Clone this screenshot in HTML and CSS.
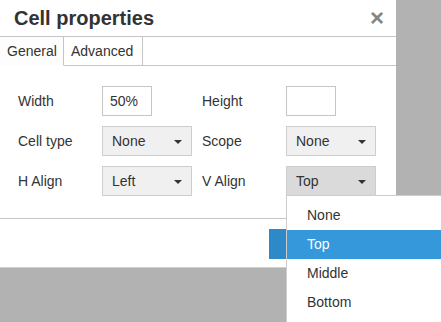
FILE: index.html
```html
<!DOCTYPE html>
<html lang="en">
<head>
  <meta charset="UTF-8">
  <title>Cell properties</title>
  <link rel="stylesheet" href="styles.css">
</head>
<body>
  <div class="dialog">
    <div class="dialog-head">
      <h1>Cell properties</h1>
      <span class="close">&times;</span>
    </div>

    <div class="tabs">
      <div class="tab active">General</div>
      <div class="tab tab-adv">Advanced</div>
      <div class="tab-fill"></div>
    </div>

    <div class="form">
      <label>Width</label>
      <div class="field"><input type="text" value="50%"></div>
      <label>Height</label>
      <div class="field"><input type="text" value=""></div>

      <label>Cell type</label>
      <div class="field"><div class="select">None<span class="caret"></span></div></div>
      <label>Scope</label>
      <div class="field"><div class="select">None<span class="caret"></span></div></div>

      <label>H Align</label>
      <div class="field"><div class="select">Left<span class="caret"></span></div></div>
      <label>V Align</label>
      <div class="field menu-anchor">
        <div class="select open">Top<span class="caret"></span></div>
        <ul class="menu">
          <li>None</li>
          <li class="active">Top</li>
          <li>Middle</li>
          <li>Bottom</li>
        </ul>
      </div>
    </div>

    <div class="dialog-foot">
      <button class="save-btn" aria-label="Save"></button>
    </div>
  </div>
</body>
</html>
```

FILE: styles.css
```css
:root {
  --border: #c5c5c5;
  --text: #333;
  --blue: #3498db;
}

body {
  margin: 0;
  background: #b2b2b2;
  font-family: "Liberation Sans", Arial, sans-serif;
  font-size: 14px;
  color: var(--text);
  width: 441px;
  height: 322px;
  overflow: hidden;
}

.dialog {
  width: 396px;
  height: 267px;
  background: #fff;
  border-bottom: 1px solid #cfcfcf;
  display: flex;
  flex-direction: column;
}

.dialog-head {
  height: 36px;
  border-bottom: 1px solid var(--border);
  display: flex;
  align-items: center;
  justify-content: space-between;
  padding: 0 12px 0 14px;
}

h1 {
  margin: 0;
  font-size: 20px;
  font-weight: bold;
  color: #333;
}

.close {
  font-size: 24px;
  line-height: 1;
  color: #858585;
  font-weight: bold;
  margin-top: -1px;
}

.tabs {
  display: flex;
  height: 29px;
}

.tab {
  padding: 0 7px;
  line-height: 29px;
  border-right: 1px solid var(--border);
  border-bottom: 1px solid var(--border);
  background: #fff;
}

.tab.active {
  background: #fdfdfd;
  border-bottom-color: transparent;
  width: 49px;
}

.tab-adv {
  width: 64px;
}

.tab-fill {
  flex: 1;
  border-bottom: 1px solid var(--border);
}

.form {
  display: grid;
  grid-template-columns: 84px 100px 84px 90px;
  grid-auto-rows: 30px;
  row-gap: 10px;
  padding: 20px 0 0 18px;
  align-items: center;
}

.field {
  height: 30px;
}

input {
  box-sizing: border-box;
  width: 50px;
  height: 30px;
  border: 1px solid var(--border);
  padding: 0 7px;
  font: inherit;
  color: var(--text);
  outline: none;
}

.select {
  box-sizing: border-box;
  width: 90px;
  height: 30px;
  border: 1px solid #cdcdcd;
  background: #f0f0f0;
  padding: 0 9px;
  line-height: 28px;
  position: relative;
}

.select.open {
  background: #dadada;
}

.caret {
  position: absolute;
  right: 9px;
  top: 13px;
  border-left: 4px solid transparent;
  border-right: 4px solid transparent;
  border-top: 4px solid #333;
}

.menu-anchor {
  position: relative;
}

.menu {
  position: absolute;
  left: 0;
  top: 29px;
  width: 170px;
  margin: 0;
  padding: 5px 0;
  list-style: none;
  background: #fff;
  border: 1px solid #cdcdcd;
  z-index: 2;
}

.menu li {
  height: 29px;
  line-height: 29px;
  padding-left: 20px;
}

.menu li.active {
  background: var(--blue);
  color: #fff;
}

.dialog-foot {
  margin-top: auto;
  height: 49px;
  border-top: 1px solid var(--border);
  padding: 10px 0 0 269px;
  box-sizing: border-box;
}

.save-btn {
  width: 60px;
  height: 30px;
  border: none;
  background: #2d89c7;
  display: block;
}
```
